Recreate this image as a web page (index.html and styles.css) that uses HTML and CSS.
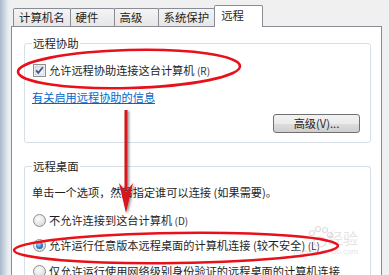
FILE: index.html
```html
<!DOCTYPE html>
<html>
<head>
    <title>系统属性 - 远程</title>
    <link rel="stylesheet" href="styles.css">
</head>
<body>
    <div class="window">
        <div class="tabs">
            <div class="tab">计算机名</div>
            <div class="tab">硬件</div>
            <div class="tab">高级</div>
            <div class="tab">系统保护</div>
            <div class="tab active">远程</div>
        </div>

        <div class="panel">
            <div class="group">
                <div class="legend">远程协助</div>
                <label class="option first">
                    <svg class="check" width="13" height="13" viewBox="0 0 13 13">
                        <defs>
                            <linearGradient id="cb" x1="0" y1="0" x2="1" y2="1">
                                <stop offset="0" stop-color="#d9dde3"/>
                                <stop offset="1" stop-color="#f7f8f9"/>
                            </linearGradient>
                        </defs>
                        <rect x="0.5" y="0.5" width="12" height="12" fill="#fff" stroke="#8e8f8f"/>
                        <rect x="2" y="2" width="9" height="9" fill="url(#cb)" stroke="#b7bcc4" stroke-width="0.6"/>
                        <path d="M3.2 6.4 L5.3 8.9 L9.8 3.3" fill="none" stroke="#3c5191" stroke-width="1.7"/>
                    </svg>
                    <span>允许远程协助连接这台计算机 <small>(R)</small></span>
                </label>
                <a class="link" href="#">有关启用远程协助的信息</a>
                <div class="actions">
                    <button class="btn">高级(V)...</button>
                </div>
            </div>

            <div class="group second">
                <div class="legend">远程桌面</div>
                <p class="hint">单击一个选项，然后指定谁可以连接 (如果需要)。</p>
                <label class="option">
                    <span class="radio"></span>
                    <span>不允许连接到这台计算机 <small>(D)</small></span>
                </label>
                <label class="option">
                    <span class="radio on"></span>
                    <span>允许运行任意版本远程桌面的计算机连接 (较不安全) <small>(L)</small></span>
                </label>
                <label class="option last">
                    <span class="radio"></span>
                    <span>仅允许运行使用网络级别身份验证的远程桌面的计算机连接</span>
                </label>
            </div>
        </div>
    </div>

    <div class="watermark">
        <span class="wm-big">经验</span>
        <span class="wm-small">jingyan.baidu.com</span>
    </div>

    <svg class="marks" width="389" height="275" viewBox="0 0 389 275">
        <defs>
            <filter id="sh" x="-50%" y="-10%" width="200%" height="120%">
                <feDropShadow dx="1.5" dy="1" stdDeviation="1" flood-color="#000" flood-opacity="0.45"/>
            </filter>
        </defs>
        <!-- faint watermark paw -->
        <g fill="none" stroke="#d6d6d6" stroke-width="1.2" opacity="0.8">
            <ellipse cx="320" cy="242" rx="6" ry="5"/>
            <circle cx="312" cy="233" r="2.5"/>
            <circle cx="318" cy="229" r="2.5"/>
            <circle cx="325" cy="230" r="2.5"/>
            <circle cx="330" cy="235" r="2.5"/>
        </g>
        <ellipse cx="129" cy="69" rx="111" ry="19" fill="none" stroke="#e8101a" stroke-width="2.6" transform="rotate(-1.5 129 69)"/>
        <ellipse cx="176" cy="248" rx="162" ry="15" fill="none" stroke="#e8101a" stroke-width="2.6" transform="rotate(-0.8 176 248)"/>
        <g filter="url(#sh)">
            <line x1="126" y1="110" x2="126" y2="190" stroke="#d8131b" stroke-width="3"/>
            <path d="M119 183 L126 213 L133 183 L126 192 Z" fill="#d8131b"/>
        </g>
    </svg>
</body>
</html>
```

FILE: styles.css
```css
body { margin: 0; width: 389px; height: 275px; overflow: hidden; position: relative; font-family: "Noto Sans CJK SC", "Microsoft YaHei", sans-serif; font-size: 11.2px; color: #1e1e1e; background: linear-gradient(to right, #a7b8cb 0, #c8d3df 4px, #e9edf1 8px, #f0f0f0 11px); }
.window { padding: 5px 7px 0 11px; }
.tabs { display: flex; align-items: flex-end; padding-left: 2px; height: 21px; }
.tab { height: 18px; line-height: 17px; box-sizing: border-box; min-width: 45px; padding: 0 5px 0 5px; border: 1px solid #898c95; border-bottom: none; border-radius: 2px 2px 0 0; background: linear-gradient(#f4f4f4, #e6e6e6); font-size: 11.4px; }
.tab + .tab { margin-left: -1px; }
.tab.active { height: 22px; margin-bottom: -1px; min-width: 49px; padding-left: 6px; line-height: 19px; background: #fff; position: relative; z-index: 1; }
.panel { background: #fff; border: 1px solid #898c95; height: 260px; overflow: hidden; padding: 0 10px 0 12px; }
.group { margin-top: 16px; border: 1px solid #d5dfe5; border-radius: 3px; padding: 0 10px 9px 7px; }
.group.second { margin-top: 23px; border-bottom: none; padding-bottom: 0; }
.legend { display: table; margin: -9px 0 0 0; padding: 0 1px; background: #fff; height: 17px; line-height: 17px; font-size: 11.4px; }
.option { display: flex; align-items: center; gap: 3px; height: 17px; line-height: 17px; margin-top: 8px; white-space: nowrap; }
.option.first { margin-top: 10px; }
.option small { font-size: 10px; color: #333; }
.check { flex: none; margin-left: 1px; }
.radio { flex: none; width: 11px; height: 11px; margin-left: 1px; border: 1px solid #8e8f8f; border-radius: 50%; background: radial-gradient(circle at 40% 35%, #fdfdfd 0, #e3e3e3 60%, #cfcfcf 100%); position: relative; }
.radio.on::after { content: ""; position: absolute; left: 2px; top: 2px; width: 7px; height: 7px; border-radius: 50%; background: radial-gradient(circle at 40% 35%, #a9d4f5 0, #2a78c4 55%, #0f4f98 100%); }
.link { display: block; width: max-content; margin-top: 10px; height: 17px; line-height: 17px; color: #0066cc; text-decoration: underline; font-size: 11.2px; }
.actions { display: flex; justify-content: flex-end; margin-top: 8px; }
.btn { display: block; width: 87px; height: 19px; padding: 0; border: 1px solid #707070; border-radius: 3px; background: linear-gradient(#f2f2f2 0, #ebebeb 50%, #dddddd 51%, #cfcfcf 100%); font-family: inherit; font-size: 11.2px; color: #1e1e1e; line-height: 15px; }
.hint { margin: 9px 0 0 0; height: 17px; line-height: 17px; white-space: nowrap; }
.group.second .hint + .option { margin-top: 11px; }
.group.second .option.last { margin-top: 9px; }
.watermark { position: absolute; right: 31px; top: 228px; display: flex; flex-direction: column; align-items: flex-end; color: rgba(200, 200, 200, 0.5); pointer-events: none; }
.wm-big { font-size: 15px; line-height: 19px; }
.wm-small { font-family: "Liberation Sans", sans-serif; font-size: 8px; line-height: 10px; }
.marks { position: absolute; left: 0; top: 0; pointer-events: none; }
```
